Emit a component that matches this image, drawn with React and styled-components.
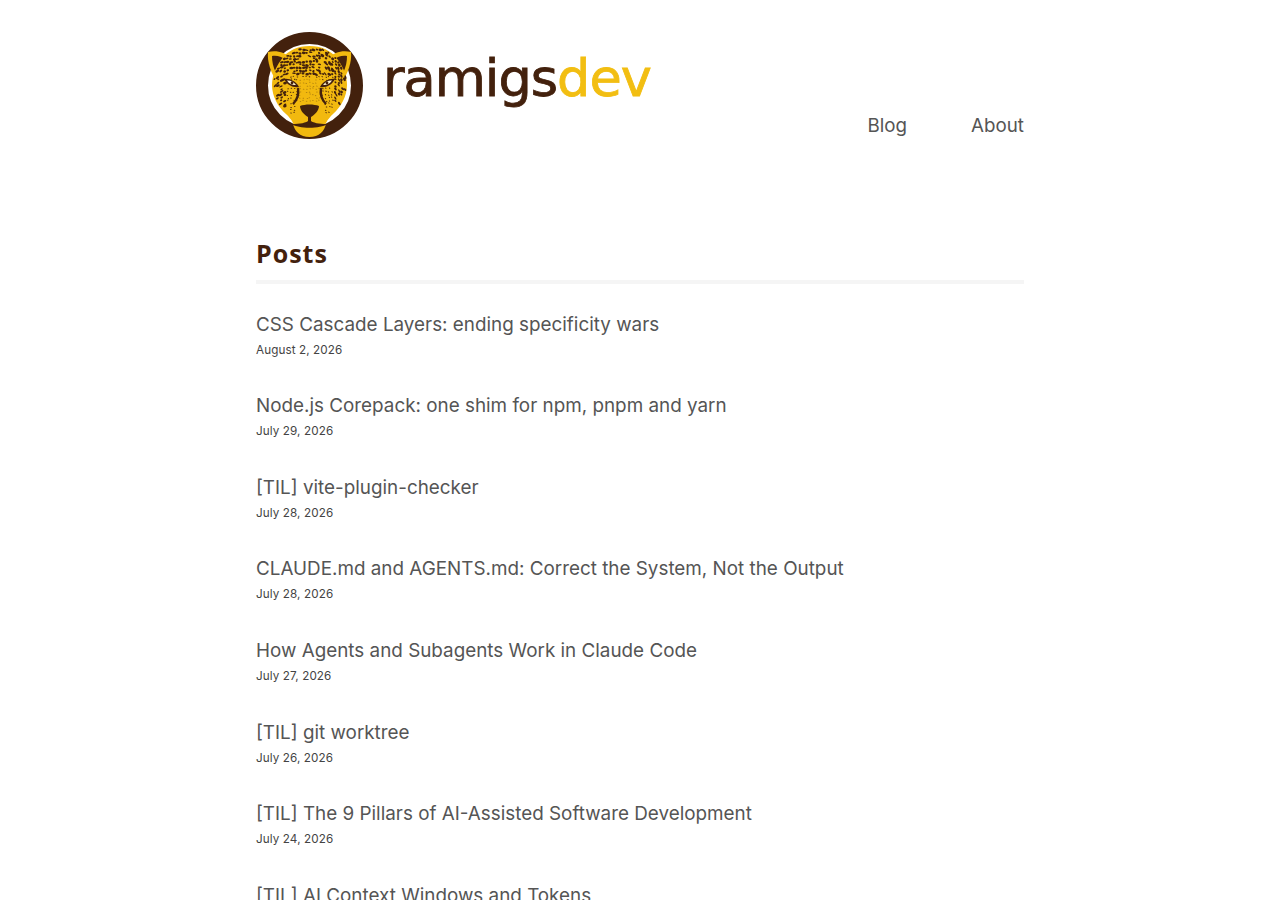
import React from 'react';
import styled, { createGlobalStyle } from 'styled-components';

const GlobalStyle = createGlobalStyle`
    html, body {
        margin: 0;
        padding: 0;
        background: #fff;
        overflow: hidden;
        height: 900px;
    }
    body {
        font-family: Inter, "Liberation Sans", sans-serif;
        color: #555;
    }
`

const Page = styled.div`
    width: 768px;
    margin: 0 auto;
`

const Header = styled.header`
    display: flex;
    justify-content: space-between;
    align-items: flex-end;
    padding-top: 32px;
    height: 107px;
`

const Brand = styled.a`
    display: flex;
    align-items: flex-start;
    gap: 20px;
`

const Wordmark = styled.span`
    display: block;
    width: 270px;
    margin-top: 17px;
    font-family: "DejaVu Sans", sans-serif;
    font-size: 51px;
    line-height: 60px;
    letter-spacing: -1px;
    white-space: nowrap;
    color: #43210d;
    -webkit-text-stroke: 0.8px currentColor;
    transform: scaleX(1.03);
    transform-origin: left center;
`

const WordAccent = styled.span`
    color: #f2be12;
`

const Nav = styled.nav`
    display: flex;
    gap: 64px;
`

const NavLink = styled.a`
    font-size: 18.75px;
    line-height: 26px;
    color: #555;
`

const Section = styled.section`
    margin-top: 99px;
`

const Heading = styled.h2`
    margin: 0;
    padding-bottom: 11.5px;
    border-bottom: 4px solid #f5f5f5;
    font-family: "Open Sans", sans-serif;
    font-size: 25px;
    line-height: 30px;
    font-weight: 700;
    letter-spacing: 1px;
    color: #43210d;
`

const PostList = styled.ul`
    list-style: none;
    margin: 0;
    padding: 27.2px 0 0;
`

const Post = styled.li`
    height: 81.6px;
`

const PostTitle = styled.a`
    display: block;
    font-size: 18.85px;
    line-height: 28px;
    color: #555;
`

const PostDate = styled.time`
    display: block;
    font-size: 11.7px;
    line-height: 18px;
    letter-spacing: 0.1px;
    margin-top: 2px;
    color: #444;
`

const posts = [
    ['CSS Cascade Layers: ending specificity wars', 'August 2, 2026'],
    ['Node.js Corepack: one shim for npm, pnpm and yarn', 'July 29, 2026'],
    ['[TIL] vite-plugin-checker', 'July 28, 2026'],
    ['CLAUDE.md and AGENTS.md: Correct the System, Not the Output', 'July 28, 2026'],
    ['How Agents and Subagents Work in Claude Code', 'July 27, 2026'],
    ['[TIL] git worktree', 'July 26, 2026'],
    ['[TIL] The 9 Pillars of AI-Assisted Software Development', 'July 24, 2026'],
    ['[TIL] AI Context Windows and Tokens', 'July 23, 2026'],
];

const BROWN = '#43210d';
const GOLD = '#f2b90f';

const FACE = 'M53.5 14 C65 14 75 18 82 28 C88 36 91 45 91 53 C91 64 85 75 77 82 C74 85 72 87 70 91 C69 99 63 105 53.5 105 C44 105 38 99 37 91 C35 87 33 85 30 82 C22 75 16 64 16 53 C16 45 19 36 25 28 C32 18 42 14 53.5 14Z';

// mottled fur: marks on a jittered grid, faint ones on the nose bridge
const fur = [];
let seed = 7;
const rand = () => {
    seed = (seed * 16807) % 2147483647;
    return seed / 2147483647;
};
for (let y = 17; y < 90; y += 3) {
    for (let x = 18; x < 90; x += 3.2) {
        const dx = x - 53.5;
        const dy = y - 50;
        const inFace = (dx * dx) / (36 * 36) + (dy * dy) / (36 * 36) < 1 && !(y > 76 && Math.abs(dx) > 22);
        const bridge = Math.abs(dx) < 11 && y > 44;
        const muzzle = Math.abs(dx) < 15 && y > 68;
        const eye = Math.abs(Math.abs(dx) - 18) < 6 && Math.abs(y - 51) < 4;
        if (!inFace || muzzle || eye) continue;
        if (rand() < 0.2) continue;
        const big = !bridge && (y < 44 || Math.abs(dx) > 24);
        fur.push({
            x: x + rand() * 1.6,
            y: y + rand() * 1.6,
            rx: big ? 1.1 + rand() * 1 : 0.8,
            ry: big ? 0.7 + rand() * 0.7 : 0.5,
            r: Math.round((dx / 36) * 50 + rand() * 30),
            o: bridge ? 0.35 : 1,
        });
    }
}

const Logo = () => (
    <svg width="107" height="107" viewBox="0 0 107 107">
        <circle cx="53.5" cy="53.5" r="47.5" fill="none" stroke={BROWN} strokeWidth="12" />
        <path d="M12 20 C20 18 29 20 35 26 L21 50 C15 41 11 30 12 20Z" fill={GOLD} />
        <path d="M95 20 C87 18 78 20 72 26 L86 50 C92 41 96 30 95 20Z" fill={GOLD} />
        <path d="M16 24 C21 23 26 25 28 27 L20 41 C17 35 16 29 16 24Z" fill={BROWN} />
        <path d="M91 24 C86 23 81 25 79 27 L87 41 C90 35 91 29 91 24Z" fill={BROWN} />
        <path d={FACE} fill={GOLD} />
        {fur.map((m, i) => (
            <ellipse
                key={i}
                cx={m.x}
                cy={m.y}
                rx={m.rx}
                ry={m.ry}
                fill={BROWN}
                opacity={m.o}
                transform={`rotate(${m.r} ${m.x} ${m.y})`}
            />
        ))}
        <path d="M28 47 C33 46 40 49 43 55 C37 56 31 53 28 47Z" fill={BROWN} />
        <path d="M79 47 C74 46 67 49 64 55 C70 56 76 53 79 47Z" fill={BROWN} />
        <path d="M31 48.5 C34 48 38 50 40 53 C37 53.5 33 52 31 48.5Z" fill="#fff6d6" />
        <path d="M76 48.5 C73 48 69 50 67 53 C70 53.5 74 52 76 48.5Z" fill="#fff6d6" />
        <circle cx="36" cy="51" r="1.4" fill={BROWN} />
        <circle cx="71" cy="51" r="1.4" fill={BROWN} />
        <path d="M42 56 C43 62 41 68 37 72 M65 56 C64 62 66 68 70 72" fill="none" stroke={BROWN} strokeWidth="2.4" />
        <path d="M44 74 C49 72 58 72 63 74 C63 79 58 83 55 85 V89 H52 V85 C49 83 44 79 44 74Z" fill={BROWN} />
        <path d="M36 92 C44 92 50 91 53.5 88 C57 91 63 92 71 92 C65 97 42 97 36 92Z" fill={BROWN} />
    </svg>
);

const App = () => (
    <Page>
        <GlobalStyle />
        <Header>
            <Brand>
                <Logo />
                <Wordmark>ramigs<WordAccent>dev</WordAccent></Wordmark>
            </Brand>
            <Nav>
                <NavLink>Blog</NavLink>
                <NavLink>About</NavLink>
            </Nav>
        </Header>
        <Section>
            <Heading>Posts</Heading>
            <PostList>
                {posts.map(([title, date]) => (
                    <Post key={title}>
                        <PostTitle>{title}</PostTitle>
                        <PostDate>{date}</PostDate>
                    </Post>
                ))}
            </PostList>
        </Section>
    </Page>
);

export default App;
